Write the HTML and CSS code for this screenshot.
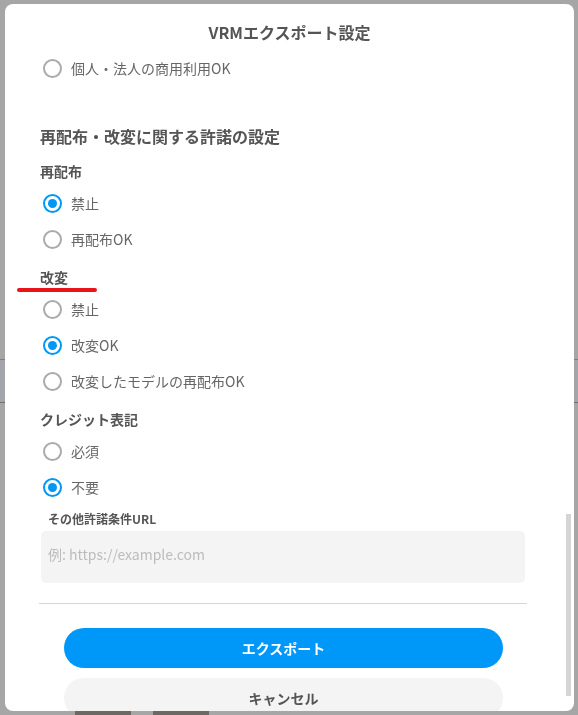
FILE: index.html
```html
<!DOCTYPE html>
<html lang="ja">
<head>
<meta charset="utf-8">
<title>VRMエクスポート設定</title>
<link rel="stylesheet" href="styles.css">
</head>
<body>
<div class="backdrop">
  <div class="band"></div>
  <div class="thumbs">
    <div class="thumb"></div>
    <div class="thumb"></div>
  </div>
</div>

<div class="modal" role="dialog">
  <div class="modal-header">VRMエクスポート設定</div>
  <div class="modal-body">
    <label class="radio-row"><span class="radio"></span><span class="radio-text">個人・法人の商用利用OK</span></label>

    <h2 class="section-title">再配布・改変に関する許諾の設定</h2>

    <div class="group-label">再配布</div>
    <label class="radio-row"><span class="radio checked"></span><span class="radio-text">禁止</span></label>
    <label class="radio-row"><span class="radio"></span><span class="radio-text">再配布OK</span></label>

    <div class="group-label marked">改変</div>
    <label class="radio-row"><span class="radio"></span><span class="radio-text">禁止</span></label>
    <label class="radio-row"><span class="radio checked"></span><span class="radio-text">改変OK</span></label>
    <label class="radio-row"><span class="radio"></span><span class="radio-text">改変したモデルの再配布OK</span></label>

    <div class="group-label">クレジット表記</div>
    <label class="radio-row"><span class="radio"></span><span class="radio-text">必須</span></label>
    <label class="radio-row"><span class="radio checked"></span><span class="radio-text">不要</span></label>

    <div class="url-label">その他許諾条件URL</div>
    <div class="url-input">例: https://example.com</div>

    <div class="divider"></div>

    <button class="btn btn-primary">エクスポート</button>
    <button class="btn btn-secondary">キャンセル</button>
  </div>
  <div class="scrollbar"></div>
</div>
</body>
</html>
```
FILE: styles.css
```css
* { box-sizing: border-box; }
html, body {
  margin: 0;
  padding: 0;
  height: 100%;
  overflow: hidden;
}
body {
  background: #a6a6a6;
  font-family: "Noto Sans CJK JP", "Noto Sans", sans-serif;
}

.backdrop {
  padding-top: 359px;
}
.band {
  height: 44px;
  border-top: 1px solid #7f7f7f;
  border-bottom: 1px solid #6f6f6f;
  background: #a3a5aa;
}
.thumbs {
  display: flex;
  gap: 22px;
  margin-top: 308px;
  margin-left: 75px;
}
.thumb {
  width: 56px;
  height: 10px;
  background: #6e6862;
}

.modal {
  position: fixed;
  top: 4px;
  left: 5px;
  width: 569px;
  height: 707px;
  background: #fff;
  border-radius: 8px;
  overflow: hidden;
  display: flex;
  flex-direction: column;
}
.modal-header {
  flex: none;
  padding-top: 17px;
  height: 44px;
  line-height: 22px;
  text-align: center;
  font-size: 16px;
  font-weight: 700;
  color: #555;
}
.modal-body {
  flex: 1;
  padding: 2px 47px 0 34px;
  overflow: hidden;
}

.radio-row {
  display: flex;
  align-items: center;
  height: 36px;
  padding-left: 4px;
  gap: 9px;
}
.radio {
  flex: none;
  width: 19px;
  height: 19px;
  border: 2px solid #ababab;
  border-radius: 50%;
  display: flex;
  align-items: center;
  justify-content: center;
}
.radio.checked {
  border: 2px solid #0098f6;
}
.radio.checked::after {
  content: "";
  width: 9px;
  height: 9px;
  border-radius: 50%;
  background: #0098f6;
}
.radio-text {
  font-size: 14px;
  color: #666;
  line-height: 20px;
}

.section-title {
  margin: 38px 0 0 1px;
  font-size: 16px;
  line-height: 24px;
  font-weight: 700;
  color: #555;
}
.group-label {
  margin: 13px 0 4px 1px;
  font-size: 14px;
  line-height: 20px;
  font-weight: 700;
  color: #555;
}
.section-title + .group-label { margin-top: 13px; }
.radio-row + .group-label { margin-top: 10px; }

.group-label.marked {
  position: relative;
}
.group-label.marked::after {
  content: "";
  position: absolute;
  left: -23px;
  top: 21px;
  width: 80px;
  height: 4px;
  border-radius: 2px;
  background: #e8141a;
}

.url-label {
  margin: 5px 0 0 9px;
  font-size: 12px;
  line-height: 18px;
  font-weight: 700;
  color: #555;
}
.url-input {
  margin: 3px 2px 0 2px;
  height: 52px;
  border-radius: 5px;
  background: #f4f4f4;
  padding: 13px 0 0 7px;
  font-size: 14px;
  line-height: 20px;
  color: #bcbcbc;
}

.divider {
  margin-top: 20px;
  height: 1px;
  background: #d6d6d6;
}

.btn {
  display: block;
  width: 439px;
  height: 40px;
  margin-left: 25px;
  border: none;
  border-radius: 20px;
  font-family: "Noto Sans CJK JP", "Noto Sans", sans-serif;
  font-size: 14px;
  font-weight: 700;
  padding: 0;
}
.btn-primary {
  margin-top: 24px;
  background: #0098f8;
  color: #fff;
}
.btn-secondary {
  margin-top: 10px;
  background: #f4f4f4;
  color: #555;
}

.scrollbar {
  position: absolute;
  left: 561px;
  top: 510px;
  width: 5px;
  height: 182px;
  background: #d5d5d5;
}
```
